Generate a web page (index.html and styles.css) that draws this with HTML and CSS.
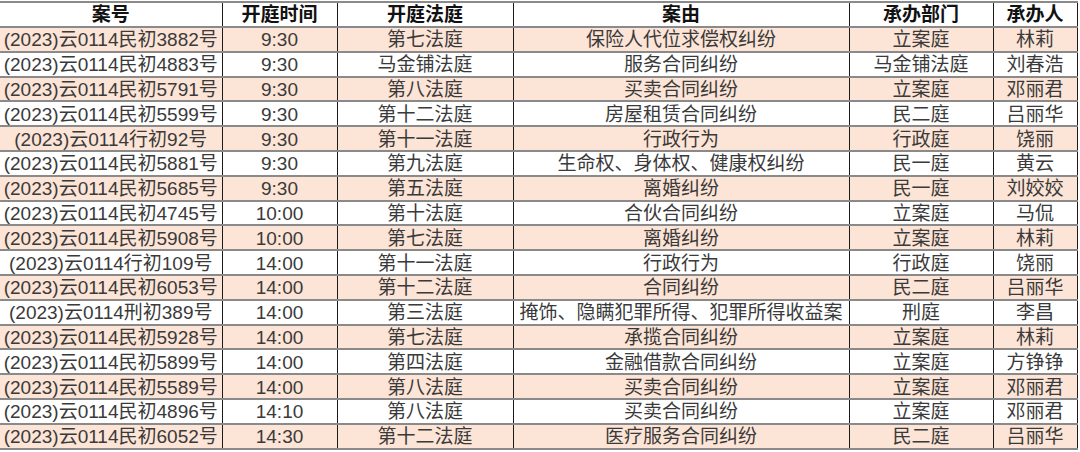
FILE: index.html
```html
<!DOCTYPE html>
<html lang="zh">
<head>
<meta charset="utf-8">
<title>开庭排期</title>
<link rel="stylesheet" href="styles.css">
</head>
<body>
<table class="sched">
  <colgroup>
    <col class="c1"><col class="c2"><col class="c3"><col class="c4"><col class="c5"><col class="c6">
  </colgroup>
  <thead>
    <tr><th>案号</th><th>开庭时间</th><th>开庭法庭</th><th>案由</th><th>承办部门</th><th>承办人</th></tr>
  </thead>
  <tbody>
    <tr class="alt"><td>(2023)云0114民初3882号</td><td>9:30</td><td>第七法庭</td><td>保险人代位求偿权纠纷</td><td>立案庭</td><td>林莉</td></tr>
    <tr><td>(2023)云0114民初4883号</td><td>9:30</td><td>马金铺法庭</td><td>服务合同纠纷</td><td>马金铺法庭</td><td>刘春浩</td></tr>
    <tr class="alt"><td>(2023)云0114民初5791号</td><td>9:30</td><td>第八法庭</td><td>买卖合同纠纷</td><td>立案庭</td><td>邓丽君</td></tr>
    <tr><td>(2023)云0114民初5599号</td><td>9:30</td><td>第十二法庭</td><td>房屋租赁合同纠纷</td><td>民二庭</td><td>吕丽华</td></tr>
    <tr class="alt"><td>(2023)云0114行初92号</td><td>9:30</td><td>第十一法庭</td><td>行政行为</td><td>行政庭</td><td>饶丽</td></tr>
    <tr><td>(2023)云0114民初5881号</td><td>9:30</td><td>第九法庭</td><td>生命权、身体权、健康权纠纷</td><td>民一庭</td><td>黄云</td></tr>
    <tr class="alt"><td>(2023)云0114民初5685号</td><td>9:30</td><td>第五法庭</td><td>离婚纠纷</td><td>民一庭</td><td>刘姣姣</td></tr>
    <tr><td>(2023)云0114民初4745号</td><td>10:00</td><td>第十法庭</td><td>合伙合同纠纷</td><td>立案庭</td><td>马侃</td></tr>
    <tr class="alt"><td>(2023)云0114民初5908号</td><td>10:00</td><td>第七法庭</td><td>离婚纠纷</td><td>立案庭</td><td>林莉</td></tr>
    <tr><td>(2023)云0114行初109号</td><td>14:00</td><td>第十一法庭</td><td>行政行为</td><td>行政庭</td><td>饶丽</td></tr>
    <tr class="alt"><td>(2023)云0114民初6053号</td><td>14:00</td><td>第十二法庭</td><td>合同纠纷</td><td>民二庭</td><td>吕丽华</td></tr>
    <tr><td>(2023)云0114刑初389号</td><td>14:00</td><td>第三法庭</td><td>掩饰、隐瞒犯罪所得、犯罪所得收益案</td><td>刑庭</td><td>李昌</td></tr>
    <tr class="alt"><td>(2023)云0114民初5928号</td><td>14:00</td><td>第七法庭</td><td>承揽合同纠纷</td><td>立案庭</td><td>林莉</td></tr>
    <tr><td>(2023)云0114民初5899号</td><td>14:00</td><td>第四法庭</td><td>金融借款合同纠纷</td><td>立案庭</td><td>方铮铮</td></tr>
    <tr class="alt"><td>(2023)云0114民初5589号</td><td>14:00</td><td>第八法庭</td><td>买卖合同纠纷</td><td>立案庭</td><td>邓丽君</td></tr>
    <tr><td>(2023)云0114民初4896号</td><td>14:10</td><td>第八法庭</td><td>买卖合同纠纷</td><td>立案庭</td><td>邓丽君</td></tr>
    <tr class="alt"><td>(2023)云0114民初6052号</td><td>14:30</td><td>第十二法庭</td><td>医疗服务合同纠纷</td><td>民二庭</td><td>吕丽华</td></tr>
  </tbody>
</table>
</body>
</html>
```
FILE: styles.css
```css
html, body {
  margin: 0;
  padding: 0;
  background: #ffffff;
}
body {
  padding-top: 1px;
}
.sched {
  border-collapse: collapse;
  table-layout: fixed;
  width: 1077px;
  font-family: "Liberation Sans", "Noto Sans CJK SC", sans-serif;
  font-size: 19px;
  color: #3a3a3a;
}
.c1 { width: 222px; }
.c2 { width: 115px; }
.c3 { width: 176px; }
.c4 { width: 336px; }
.c5 { width: 144px; }
.c6 { width: 84px; }
.sched th,
.sched td {
  padding: 0;
  text-align: center;
  white-space: nowrap;
  overflow: hidden;
  border-top: 2px solid #8a8a8a;
  border-bottom: 2px solid #8a8a8a;
  border-left: 1px solid #1a1a1a;
  border-right: 1px solid #1a1a1a;
  line-height: 20px;
}
.sched th {
  height: 23px;
  font-weight: bold;
  color: #111111;
}
.sched td {
  height: 20.8px;
  padding-top: 2px;
}
.sched tr > :first-child {
  border-left: none;
}
.sched .alt td {
  background: #fce4d6;
}
```
